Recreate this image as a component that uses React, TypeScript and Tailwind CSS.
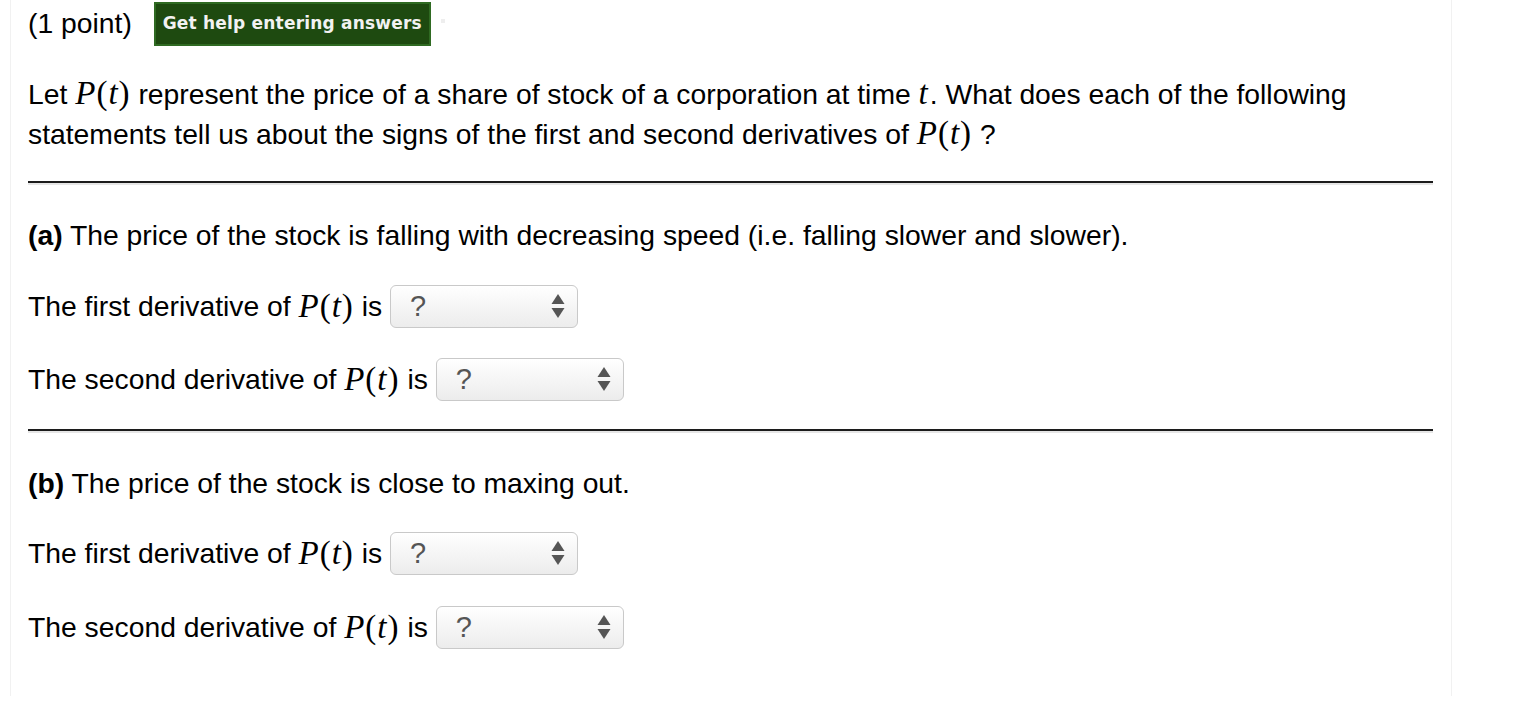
import React from "react";

function PT() {
  return (
    <span className="font-['Liberation_Serif',serif] text-[33px] leading-none tracking-[1px] text-black">
      <i>P</i>(<i>t</i>)
    </span>
  );
}

function Select() {
  return (
    <span className="inline-flex h-[43px] w-[188px] items-center justify-between rounded-[6px] border border-[#c9c9c9] bg-gradient-to-b from-white to-[#ececec] pl-[19px] pr-[12px] shadow-[inset_0_1px_0_#ffffff]">
      <span className="text-[29px] leading-none text-[#555]">?</span>
      <svg width="14" height="26" viewBox="0 0 14 26" aria-hidden>
        <path d="M7 1 L13.5 11 L0.5 11 Z" fill="#555" />
        <path d="M0.5 15 L13.5 15 L7 25 Z" fill="#555" />
      </svg>
    </span>
  );
}

function Row({ label }: { label: string }) {
  return (
    <div className="flex h-[44px] items-center whitespace-pre">
      <span>{label} of </span>
      <PT />
      <span> is </span>
      <Select />
    </div>
  );
}

function Rule() {
  return (
    <div className="mr-[18px] h-[2px] bg-[#1c1c1c] shadow-[0_2px_0_#e6e6e6]" />
  );
}

export default function App() {
  return (
    <div className="min-h-[721px] bg-white font-['Liberation_Sans',Arial,sans-serif] text-[28.3px] text-black">
      <div className="ml-[10px] h-[696px] w-[1442px] border-x border-[#f1f1f1] pl-[17px]">
        <div className="flex h-[47px] items-center">
          <span className="leading-none">(1 point)</span>
          <button
            type="button"
            className="ml-[22px] flex h-[44px] w-[277px] items-center justify-center border-2 border-[#2f6a22] bg-[#1e4a10] font-['DejaVu_Sans',sans-serif] text-[17px] font-bold tracking-[0.2px] text-[#f2f2f2]"
          >
            Get help entering answers
          </button>
          <span className="ml-[10px] mb-[6px] h-[4px] w-[4px] bg-[#eeeeee]" />
        </div>

        <p className="mt-[26px] pr-[60px] leading-[40px]">
          Let <PT /> represent the price of a share of stock of a corporation at
          time{" "}
          <i className="font-['Liberation_Serif',serif] text-[33px]">t</i>
          <span className="ml-[2px]">.</span> What does each of the following
          statements tell us about the signs of the first and second derivatives
          of <PT />
          {"  "}?
        </p>

        <div className="mt-[27px]">
          <Rule />
        </div>

        <p className="mt-[32px] leading-[40px]">
          <b>(a)</b> The price of the stock is falling with decreasing speed
          (i.e. falling slower and slower).
        </p>

        <div className="mt-[29px]">
          <Row label="The first derivative" />
        </div>
        <div className="mt-[29px]">
          <Row label="The second derivative" />
        </div>

        <div className="mt-[28px]">
          <Rule />
        </div>

        <p className="mt-[32px] leading-[40px]">
          <b>(b)</b> The price of the stock is close to maxing out.
        </p>

        <div className="mt-[28px]">
          <Row label="The first derivative" />
        </div>
        <div className="mt-[30px]">
          <Row label="The second derivative" />
        </div>
      </div>
    </div>
  );
}
